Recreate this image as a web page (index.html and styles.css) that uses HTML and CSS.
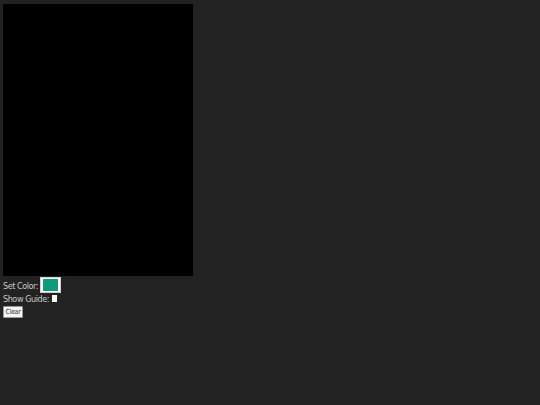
FILE: index.html
```html
<!DOCTYPE html>
<html>
<head>
<meta charset="utf-8">
<link rel="stylesheet" href="styles.css">
</head>
<body>
<div class="canvas"></div>
<div class="controls">
  <div class="row row-color">
    <label class="label">Set Color:</label>
    <span class="swatch"><span class="swatch-fill"></span></span>
  </div>
  <div class="row row-guide">
    <label class="label">Show Guide:</label>
    <span class="check"></span>
  </div>
  <div class="row">
    <button class="clear">Clear</button>
  </div>
</div>
</body>
</html>
```
FILE: styles.css
```css
html, body {
  background: #222222;
}
body {
  margin: 4px 3px;
  font-family: "DejaVu Sans Condensed", "DejaVu Sans", sans-serif;
  font-size: 9px;
  letter-spacing: -0.45px;
  color: #c8c8c8;
}
.canvas {
  width: 190px;
  height: 272px;
  background: #000000;
}
.controls {
  display: flex;
  flex-direction: column;
}
.row {
  display: flex;
  align-items: center;
}
.row-color {
  margin-top: 1px;
  gap: 2px;
  height: 16px;
}
.row-guide {
  gap: 2px;
  height: 11px;
}
.label {
  line-height: 10px;
  padding-top: 1px;
}
.swatch {
  display: inline-block;
  width: 21px;
  height: 16px;
  box-sizing: border-box;
  background: #ffffff;
  border: 1px solid #d0d0d0;
  padding: 1px 2px;
}
.swatch-fill {
  display: block;
  width: 100%;
  height: 100%;
  background: #0f9a7c;
}
.check {
  display: inline-block;
  width: 5px;
  height: 7px;
  background: #ffffff;
  margin-left: 1px;
}
.clear {
  margin-top: 2px;
  font-family: inherit;
  font-size: 7px;
  letter-spacing: -0.3px;
  color: #333;
  background: #f4f4f4;
  border: 1px solid #999;
  border-radius: 1px;
  padding: 0;
  width: 20px;
  height: 12px;
  line-height: 10px;
}
```
